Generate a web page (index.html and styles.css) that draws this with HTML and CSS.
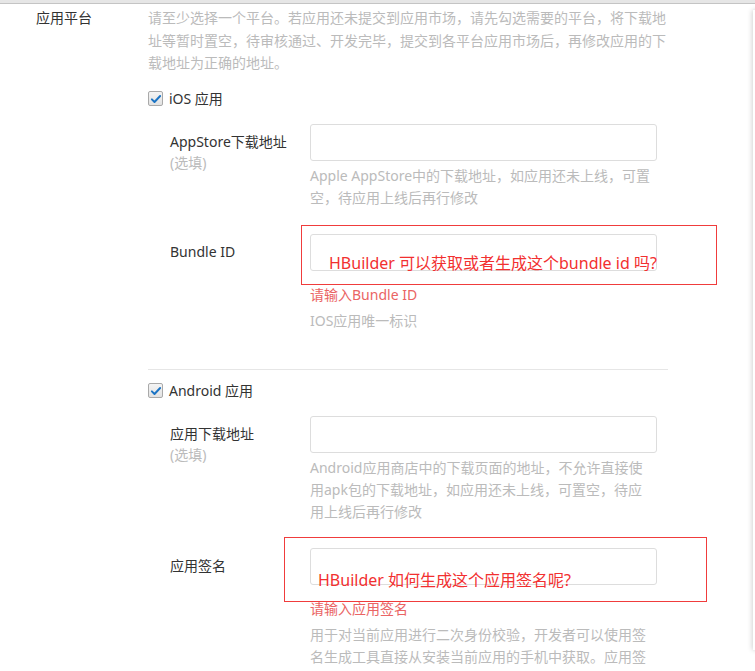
FILE: index.html
```html
<!DOCTYPE html>
<html lang="zh-CN">
<head>
    <meta charset="UTF-8">
    <meta name="viewport" content="width=device-width, initial-scale=1.0">
    <title>应用平台</title>
    <link rel="stylesheet" href="styles.css">
</head>
<body>
    <div class="topbar"></div>
    <div class="page">
        <div class="form-row">
            <div class="row-label">应用平台</div>
            <div class="row-body">
                <p class="tip">请至少选择一个平台。若应用还未提交到应用市场，请先勾选需要的平台，将下载地址等暂时置空，待审核通过、开发完毕，提交到各平台应用市场后，再修改应用的下载地址为正确的地址。</p>

                <div class="platform">
                    <label class="check-line">
                        <span class="checkbox">
                            <svg viewBox="0 0 16 16" width="12" height="12"><path d="M2.5 8.5 L6 12 L13.5 4" fill="none" stroke="#1c74c4" stroke-width="2.6" stroke-linecap="round" stroke-linejoin="round"/></svg>
                        </span>
                        iOS 应用
                    </label>
                    <div class="fields">
                        <div class="field">
                            <div class="field-label">AppStore下载地址<br><span class="optional">(选填)</span></div>
                            <div class="field-body">
                                <input class="input" type="text">
                                <div class="field-help">Apple AppStore中的下载地址，如应用还未上线，可置空，待应用上线后再行修改</div>
                            </div>
                        </div>
                        <div class="field">
                            <div class="field-label">Bundle ID</div>
                            <div class="field-body">
                                <input class="input" type="text">
                                <div class="field-error">请输入Bundle ID</div>
                                <div class="field-help after-error">IOS应用唯一标识</div>
                            </div>
                        </div>
                    </div>
                </div>

                <div class="divider"></div>

                <div class="platform android">
                    <label class="check-line">
                        <span class="checkbox">
                            <svg viewBox="0 0 16 16" width="12" height="12"><path d="M2.5 8.5 L6 12 L13.5 4" fill="none" stroke="#1c74c4" stroke-width="2.6" stroke-linecap="round" stroke-linejoin="round"/></svg>
                        </span>
                        Android 应用
                    </label>
                    <div class="fields">
                        <div class="field">
                            <div class="field-label">应用下载地址<br><span class="optional">(选填)</span></div>
                            <div class="field-body">
                                <input class="input" type="text">
                                <div class="field-help">Android应用商店中的下载页面的地址，不允许直接使用apk包的下载地址，如应用还未上线，可置空，待应用上线后再行修改</div>
                            </div>
                        </div>
                        <div class="field">
                            <div class="field-label">应用签名</div>
                            <div class="field-body">
                                <input class="input" type="text">
                                <div class="field-error">请输入应用签名</div>
                                <div class="field-help after-error">用于对当前应用进行二次身份校验，开发者可以使用签名生成工具直接从安装当前应用的手机中获取。应用签名由小写字母和数字组成。</div>
                            </div>
                        </div>
                    </div>
                </div>
            </div>
        </div>

        <div class="note note-ios">HBuilder 可以获取或者生成这个bundle id 吗?</div>
        <div class="note note-android">HBuilder 如何生成这个应用签名呢?</div>
    </div>
    <div class="edge-shadow"></div>
</body>
</html>
```

FILE: styles.css
```css
body {
    margin: 0;
    font-family: "Noto Sans", "Noto Sans CJK SC", sans-serif;
    font-size: 14px;
    color: #333;
    background: #fff;
    overflow: hidden;
}
.topbar {
    height: 3px;
    background: #e6e6e6;
    border-bottom: 1px solid #c4c4c4;
}
.page {
    position: relative;
    padding: 3px 0 0 36px;
}
.form-row {
    display: grid;
    grid-template-columns: 112px 520px;
}
.row-label {
    line-height: 22px;
}
.tip {
    margin: 0;
    color: #bbb;
    line-height: 22.5px;
}
.platform {
    margin-top: 13px;
}
.platform.android {
    margin-top: 10px;
}
.check-line {
    display: flex;
    align-items: center;
    gap: 6px;
    height: 22px;
    line-height: 22px;
}
.checkbox {
    width: 15px;
    height: 15px;
    box-sizing: border-box;
    border: 1px solid #a9a9a9;
    border-radius: 2px;
    background: linear-gradient(#f4f4f4, #e2e2e2);
    display: flex;
    align-items: center;
    justify-content: center;
}
.fields {
    padding-left: 22px;
    margin-top: 14px;
}
.field {
    display: grid;
    grid-template-columns: 140px 347px;
    margin-bottom: 25px;
}
.field:last-child {
    margin-bottom: 0;
}
.field-label {
    padding-top: 7px;
    line-height: 21px;
}
.optional {
    color: #bbb;
}
.input {
    display: block;
    width: 100%;
    height: 37px;
    box-sizing: border-box;
    border: 1px solid #ddd;
    border-radius: 3px;
    margin: 0;
    padding: 0 10px;
    background: #fff;
}
.field-help {
    margin-top: 4px;
    max-width: 342px;
    line-height: 22px;
    color: #bbb;
}
.field-help.after-error {
    margin-top: 4px;
}
.field-error {
    margin-top: 13px;
    line-height: 22px;
    color: #ea6464;
}
.divider {
    border-top: 1px solid #e6e6e6;
    margin: 37px 0 0;
}
.note {
    position: absolute;
    box-sizing: border-box;
    border: 1px solid #f03c3c;
    color: #f23030;
    font-size: 16px;
    line-height: 22px;
    white-space: nowrap;
}
.note-ios {
    left: 301px;
    top: 221px;
    width: 416px;
    height: 60px;
    padding: 26px 0 0 27px;
}
.note-android {
    left: 284px;
    top: 533px;
    width: 423px;
    height: 65px;
    padding: 31px 0 0 33px;
}
.edge-shadow {
    position: absolute;
    left: 753px;
    top: 10px;
    width: 20px;
    height: 640px;
    background: #fff;
    box-shadow: -1px 0 5px rgba(0, 0, 0, 0.18);
}
```
